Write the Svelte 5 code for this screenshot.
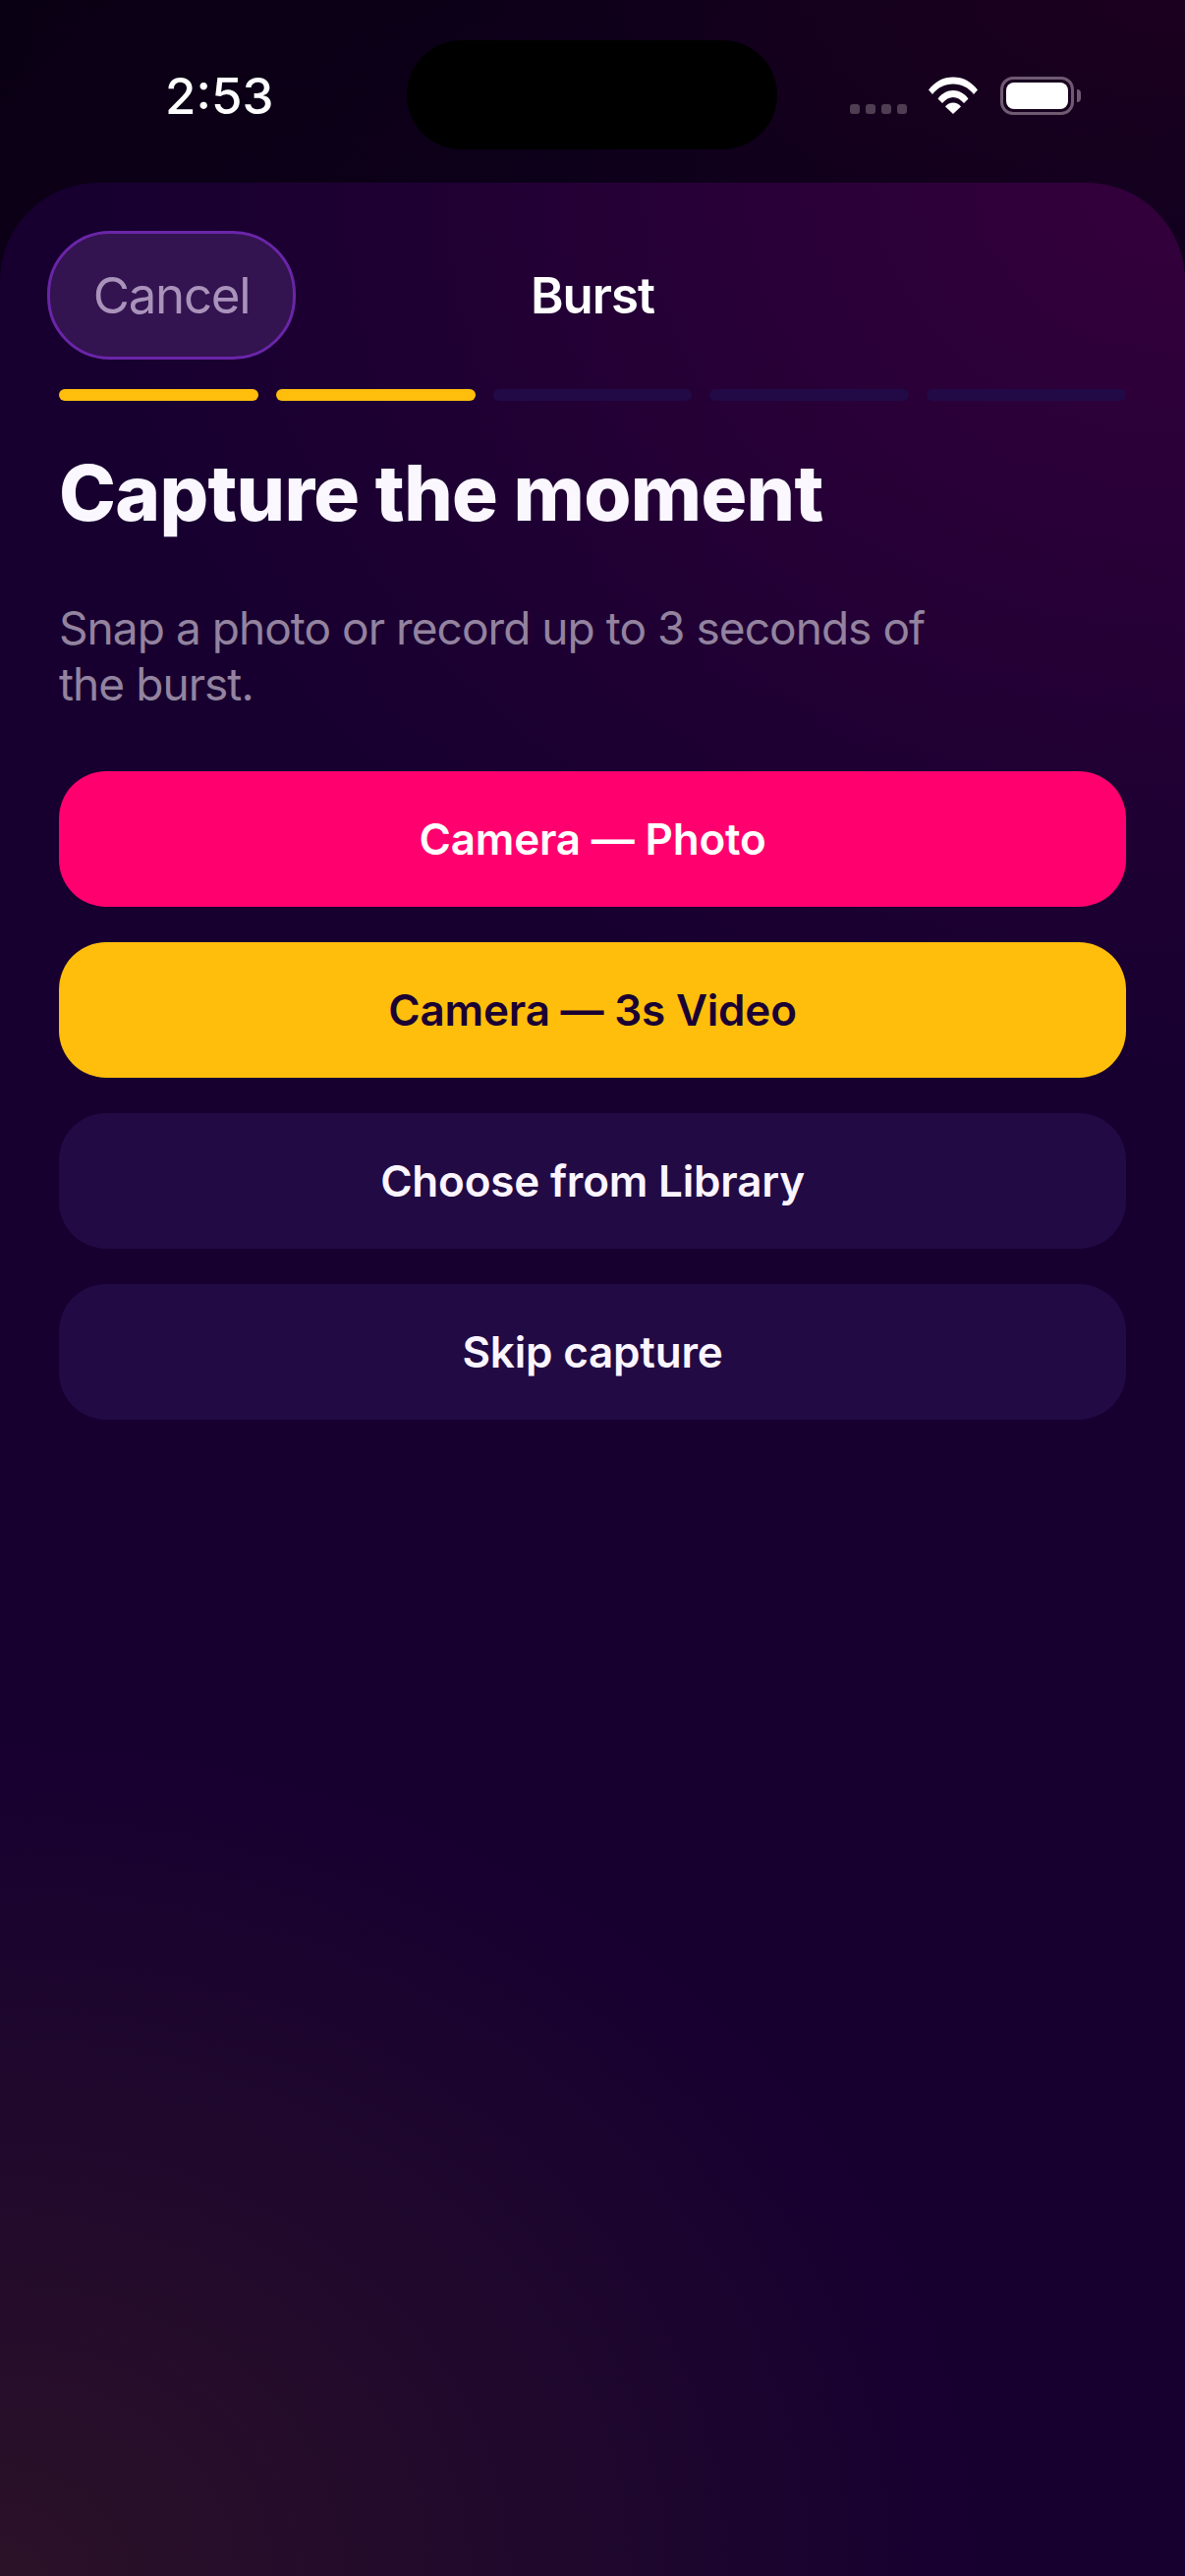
<script>
	const steps = [true, true, false, false, false];

	const actions = [
		{ label: 'Camera — Photo', kind: 'pink' },
		{ label: 'Camera — 3s Video', kind: 'amber' },
		{ label: 'Choose from Library', kind: 'plain' },
		{ label: 'Skip capture', kind: 'plain' }
	];
</script>

<div class="screen">
	<header class="status">
		<span class="time">2:53</span>
		<div class="island"></div>
		<div class="indicators">
			<div class="dots">
				<i></i><i></i><i></i><i></i>
			</div>
			<svg class="wifi" viewBox="0 0 50 38" width="50" height="38">
				<path d="M0 13.500C6.500 5 15 0.500 25 0.500S43.500 5 50 13.500L46 18C40.500 11 33.500 7.500 25 7.500S9.500 11 4 18Z" />
				<path d="M9.500 22.500C13.500 17 19 14 25 14S36.500 17 40.500 22.500L36 27C32.500 23 29 21 25 21S17.500 23 14 27Z" />
				<path d="M17 30.500C19 28 22 26.500 25 26.500S31 28 33 30.500L25 38Z" />
			</svg>
			<div class="battery">
				<div class="cell"><div class="charge"></div></div>
				<div class="cap"></div>
			</div>
		</div>
	</header>

	<main class="sheet">
		<div class="nav">
			<div class="nav-left">
				<button class="cancel">Cancel</button>
			</div>
			<span class="nav-title">Burst</span>
			<div></div>
		</div>

		<div class="progress">
			{#each steps as done}
				<div class="step" class:done></div>
			{/each}
		</div>

		<h1>Capture the moment</h1>
		<p>Snap a photo or record up to 3 seconds of the burst.</p>

		<div class="actions">
			{#each actions as action}
				<button class="action {action.kind}">{action.label}</button>
			{/each}
		</div>
	</main>
</div>

<style>
	:global(body) {
		background: #0a0014;
	}

	.screen {
		position: relative;
		width: 1206px;
		height: 2622px;
		overflow: hidden;
		font-family: Inter, 'Noto Sans', sans-serif;
		color: #fff;
		display: flex;
		flex-direction: column;
		background:
			radial-gradient(700px 300px at 100% 0%, #1c0020 0%, rgba(28, 0, 32, 0) 100%),
			linear-gradient(135deg, #0a0014 0%, #1a0030 100%);
	}

	.status {
		height: 186px;
		flex: none;
		display: flex;
		justify-content: space-between;
		padding: 0 106px 0 168px;
		box-sizing: border-box;
	}

	.time {
		font-size: 51px;
		font-weight: 500;
		line-height: 60px;
		margin-top: 68px;
	}

	.island {
		position: absolute;
		left: 414px;
		top: 41px;
		width: 377px;
		height: 111px;
		border-radius: 56px;
		background: #000;
	}

	.indicators {
		display: flex;
		align-items: flex-start;
		margin-top: 78px;
	}

	.dots {
		display: flex;
		gap: 6px;
		margin-top: 28px;
		margin-right: 22px;
	}

	.dots i {
		display: block;
		width: 10px;
		height: 10px;
		border-radius: 3px;
		background: #4f3d52;
	}

	.wifi {
		fill: #fff;
		margin-right: 23px;
	}

	.battery {
		display: flex;
		align-items: center;
	}

	.cell {
		width: 75px;
		height: 39px;
		box-sizing: border-box;
		border: 3px solid #6f5a72;
		border-radius: 13px;
		padding: 3px;
	}

	.charge {
		height: 100%;
		border-radius: 8px;
		background: #fff;
	}

	.cap {
		width: 4px;
		height: 13px;
		margin-left: 3px;
		border-radius: 0 4px 4px 0;
		background: #6f5a72;
	}

	.sheet {
		flex: 1;
		box-sizing: border-box;
		padding: 49px 60px 0;
		border-radius: 100px 100px 0 0;
		background:
			radial-gradient(1100px 900px at 100% 0%, #34003c 0%, rgba(52, 0, 60, 0) 100%),
			radial-gradient(1000px 850px at 0% 100%, #2b1228 0%, rgba(43, 18, 40, 0) 100%),
			#170030;
	}

	.nav {
		display: grid;
		grid-template-columns: 1fr auto 1fr;
		align-items: center;
	}

	.cancel {
		display: block;
		width: 253px;
		height: 131px;
		margin-left: -12px;
		box-sizing: border-box;
		border: 3px solid #6a25a8;
		border-radius: 64px;
		background: #331350;
		color: #a993bb;
		font-family: inherit;
		font-size: 51px;
		font-weight: 400;
		letter-spacing: -1.3px;
	}

	.nav-title {
		font-size: 51px;
		font-weight: 600;
		letter-spacing: -1px;
	}

	.progress {
		display: flex;
		gap: 18px;
		margin-top: 30px;
	}

	.step {
		flex: 1;
		height: 12px;
		border-radius: 6px;
		background: #220a47;
	}

	.step.done {
		background: #ffbe0b;
	}

	h1 {
		margin: 47px 0 0;
		font-size: 78px;
		line-height: 94px;
		font-weight: 800;
		letter-spacing: -0.7px;
		color: #fbf7ff;
	}

	p {
		width: 920px;
		margin: 62px 0 0;
		font-size: 46px;
		line-height: 57px;
		font-weight: 400;
		letter-spacing: -0.95px;
		color: #93839f;
	}

	.actions {
		display: flex;
		flex-direction: column;
		gap: 36px;
		margin-top: 60px;
	}

	.action {
		height: 138px;
		border: none;
		border-radius: 48px;
		font-family: inherit;
		font-size: 44px;
		font-weight: 600;
		letter-spacing: -0.2px;
		color: #fff;
	}

	.pink {
		background: #ff006e;
	}

	.amber {
		background: #ffbe0b;
		color: #1a0033;
	}

	.plain {
		background: #220a44;
		color: #faf5ff;
	}
</style>
